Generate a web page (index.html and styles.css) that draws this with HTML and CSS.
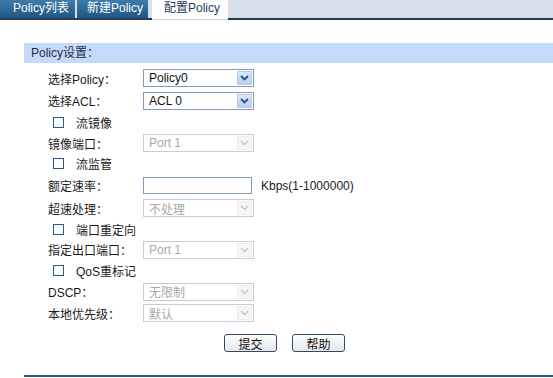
FILE: index.html
```html
<!DOCTYPE html>
<html>
<head>
<meta charset="utf-8">
<link rel="stylesheet" href="styles.css">
</head>
<body>
<div class="tabs">
  <div class="tab t1">Policy列表</div>
  <div class="tab t2">新建Policy</div>
  <div class="tab active">配置Policy</div>
</div>
<div class="panel">
  <div class="head">Policy设置：</div>
  <div class="form">
    <div class="row h22"><span class="lbl">选择Policy：</span><div class="sel"><span class="val">Policy0</span><span class="arr"><svg width="9" height="6" viewBox="0 0 9 6"><path d="M1 1 L4.5 4.5 L8 1" fill="none" stroke="#2a4f8a" stroke-width="1.8"/></svg></span></div></div>
    <div class="row h23"><span class="lbl">选择ACL：</span><div class="sel"><span class="val">ACL 0</span><span class="arr"><svg width="9" height="6" viewBox="0 0 9 6"><path d="M1 1 L4.5 4.5 L8 1" fill="none" stroke="#2a4f8a" stroke-width="1.8"/></svg></span></div></div>
    <div class="row h21"><span class="chk"></span><span class="clbl">流镜像</span></div>
    <div class="row h20"><span class="lbl">镜像端口：</span><div class="sel dis"><span class="val">Port 1</span><span class="arr"><svg width="9" height="6" viewBox="0 0 9 6"><path d="M1 1 L4.5 4.5 L8 1" fill="none" stroke="#c4c4c4" stroke-width="1.3"/></svg></span></div></div>
    <div class="row h21"><span class="chk"></span><span class="clbl">流监管</span></div>
    <div class="row h23"><span class="lbl">额定速率：</span><div class="inp"></div><span class="unit">Kbps(1-1000000)</span></div>
    <div class="row h22"><span class="lbl">超速处理：</span><div class="sel dis"><span class="val">不处理</span><span class="arr"><svg width="9" height="6" viewBox="0 0 9 6"><path d="M1 1 L4.5 4.5 L8 1" fill="none" stroke="#c4c4c4" stroke-width="1.3"/></svg></span></div></div>
    <div class="row h20"><span class="chk"></span><span class="clbl">端口重定向</span></div>
    <div class="row h21"><span class="lbl">指定出口端口：</span><div class="sel dis"><span class="val">Port 1</span><span class="arr"><svg width="9" height="6" viewBox="0 0 9 6"><path d="M1 1 L4.5 4.5 L8 1" fill="none" stroke="#c4c4c4" stroke-width="1.3"/></svg></span></div></div>
    <div class="row h21"><span class="chk"></span><span class="clbl">QoS重标记</span></div>
    <div class="row h21"><span class="lbl">DSCP：</span><div class="sel dis"><span class="val">无限制</span><span class="arr"><svg width="9" height="6" viewBox="0 0 9 6"><path d="M1 1 L4.5 4.5 L8 1" fill="none" stroke="#c4c4c4" stroke-width="1.3"/></svg></span></div></div>
    <div class="row h22"><span class="lbl">本地优先级：</span><div class="sel dis"><span class="val">默认</span><span class="arr"><svg width="9" height="6" viewBox="0 0 9 6"><path d="M1 1 L4.5 4.5 L8 1" fill="none" stroke="#c4c4c4" stroke-width="1.3"/></svg></span></div></div>
  </div>
  <div class="btns">
    <button class="btn">提交</button>
    <button class="btn">帮助</button>
  </div>
  <div class="foot"></div>
</div>
</body>
</html>
```
FILE: styles.css
```css
html, body {
  margin: 0;
  padding: 0;
  background: #fff;
  font-family: "Liberation Sans", "Noto Sans CJK SC", sans-serif;
  font-size: 12px;
  color: #1a1a1a;
}
.tabs {
  display: flex;
  height: 18px;
  background: #d6dfea;
  border-bottom: 2px solid #2b3b4c;
}
.tab {
  height: 18px;
  line-height: 17px;
  box-sizing: border-box;
  color: #fff;
  background: linear-gradient(#3f7cab, #1f5683);
}
.t1 { width: 75px; padding-left: 13px; margin-right: 2px; }
.t2 { width: 71px; padding-left: 10px; margin-right: 4px; }
.tab.active {
  width: 76px;
  height: 20px;
  padding-left: 12px;
  background: #fff;
  color: #1f3c60;
  margin-bottom: -2px;
  border-bottom: 1px solid #d4d4d4;
}
.panel {
  margin: 23px 0 0 24px;
}
.head {
  height: 20px;
  line-height: 20px;
  background: #c5d9fb;
  padding-left: 7px;
  color: #1d2f44;
}
.form {
  display: flex;
  flex-direction: column;
  margin-top: 4px;
}
.row {
  display: flex;
  align-items: center;
}
.h20 { height: 20px; }
.h21 { height: 21px; }
.h22 { height: 22px; }
.h23 { height: 23px; }
.lbl {
  width: 95px;
  padding-left: 24px;
}
.chk {
  width: 9px;
  height: 9px;
  border: 1px solid #2c5a8a;
  margin-left: 29px;
  margin-right: 12px;
  background: #fff;
}
.sel {
  width: 111px;
  height: 18px;
  box-sizing: border-box;
  border: 1px solid #7f9db9;
  display: flex;
  align-items: center;
  justify-content: space-between;
  background: #fff;
}
.val { padding-left: 5px; color: #111; }
.arr {
  width: 15px;
  height: 14px;
  margin-right: 1px;
  background: linear-gradient(#dce7fb, #b9cdf3);
  border: 1px solid #b8cbea;
  box-sizing: border-box;
  display: flex;
  align-items: center;
  justify-content: center;
}
.sel.dis { border-color: #c9ccd0; }
.sel.dis .val { color: #a9a9a9; }
.sel.dis .arr { background: #f6f6f6; border-color: #ececec; }
.inp {
  width: 109px;
  height: 17px;
  box-sizing: border-box;
  border: 1px solid #7f9db9;
}
.unit { margin-left: 9px; }
.btns {
  display: flex;
  gap: 15px;
  margin: 10px 0 0 200px;
}
.btn {
  width: 53px;
  height: 18px;
  padding: 0;
  font-family: "Liberation Sans", "Noto Sans CJK SC", sans-serif;
  font-size: 12px;
  color: #111;
  border: 1px solid #2e4a66;
  border-radius: 3px;
  background: linear-gradient(#ffffff, #e6e6e6);
}
.foot {
  margin-top: 23px;
  height: 2px;
  background: #2a5d85;
}
```
